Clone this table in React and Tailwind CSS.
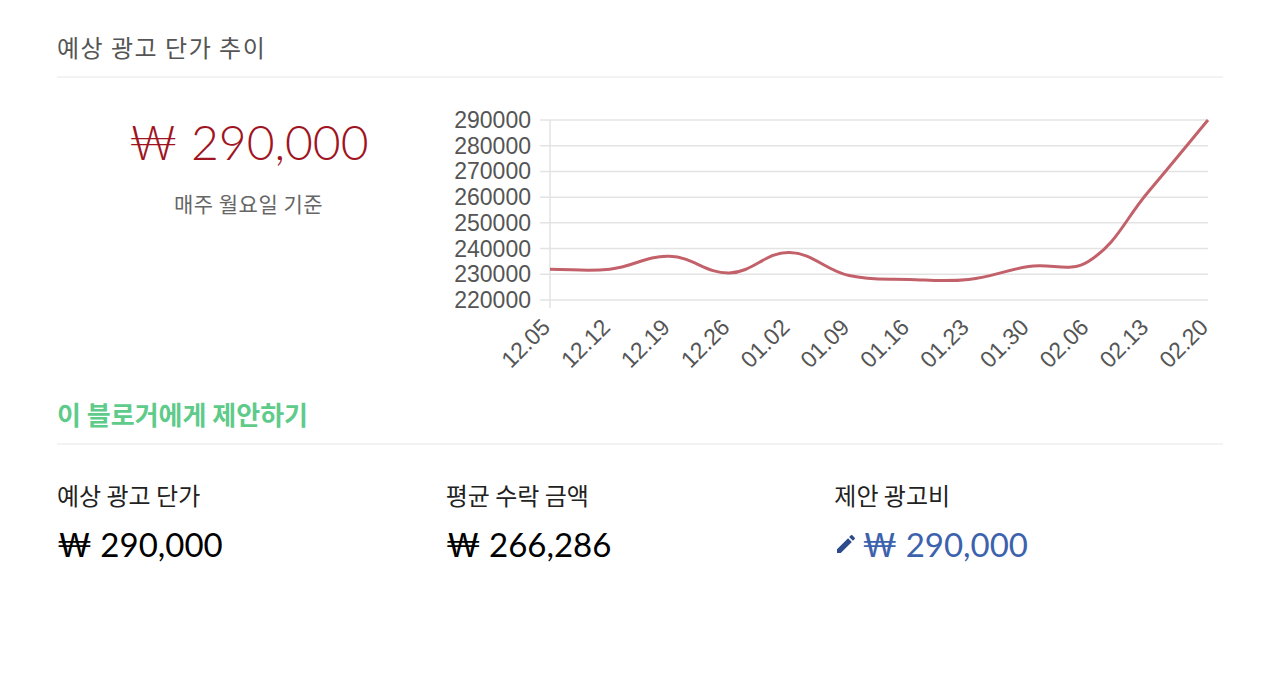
import { MdEdit } from "react-icons/md";

const KR = { fontFamily: '"Noto Sans CJK KR", "Noto Sans", sans-serif' };
const NUM = { fontFamily: 'Lato, "Noto Sans", "Noto Sans CJK KR", sans-serif' };

const labels = ["12.05", "12.12", "12.19", "12.26", "01.02", "01.09", "01.16", "01.23", "01.30", "02.06", "02.13", "02.20"];
const values = [232000, 232000, 237000, 230500, 238500, 229500, 228000, 228000, 233000, 235000, 262000, 290000];
const ticks = [290000, 280000, 270000, 260000, 250000, 240000, 230000, 220000];

// plot area in svg coords
const X0 = 103;
const X1 = 761;
const Y0 = 21;
const Y1 = 201;
const xAt = (i) => X0 + ((X1 - X0) * i) / (labels.length - 1);
const yAt = (v) => Y0 + ((290000 - v) / 70000) * (Y1 - Y0);

function splinePath(pts, t = 0.4) {
  const cps = pts.map((cur, i) => {
    const prev = pts[i - 1] || cur;
    const next = pts[i + 1] || cur;
    const d01 = Math.hypot(cur.x - prev.x, cur.y - prev.y);
    const d12 = Math.hypot(next.x - cur.x, next.y - cur.y);
    const s01 = d01 + d12 ? d01 / (d01 + d12) : 0;
    const s12 = d01 + d12 ? d12 / (d01 + d12) : 0;
    return {
      prev: { x: cur.x - t * s01 * (next.x - prev.x), y: cur.y - t * s01 * (next.y - prev.y) },
      next: { x: cur.x + t * s12 * (next.x - prev.x), y: cur.y + t * s12 * (next.y - prev.y) },
    };
  });
  let d = `M${pts[0].x},${pts[0].y}`;
  for (let i = 1; i < pts.length; i++) {
    const a = cps[i - 1].next;
    const b = cps[i].prev;
    d += ` C${a.x},${a.y} ${b.x},${b.y} ${pts[i].x},${pts[i].y}`;
  }
  return d;
}

function TrendChart() {
  const pts = values.map((v, i) => ({ x: xAt(i), y: yAt(v) }));
  return (
    <svg width="775" height="280" className="block shrink-0 overflow-visible">
      {ticks.map((v) => (
        <g key={v}>
          <line x1={X0 - 10} x2={X1} y1={yAt(v)} y2={yAt(v)} stroke="#e3e3e3" strokeWidth="1.5" />
          <text
            x={84}
            y={yAt(v) + 8}
            textAnchor="end"
            fontSize="23"
            fill="#555"
            fontFamily='"Liberation Sans", Arial, sans-serif'
          >
            {v}
          </text>
        </g>
      ))}
      <line x1={X0} x2={X0} y1={Y0} y2={Y1 + 8} stroke="#e3e3e3" strokeWidth="1.5" />
      {labels.map((l, i) => (
        <text
          key={l}
          transform={`translate(${xAt(i) - 10},${218}) rotate(-45)`}
          y={16.5}
          textAnchor="end"
          fontSize="23"
          fill="#555"
          fontFamily='"Liberation Sans", Arial, sans-serif'
        >
          {l}
        </text>
      ))}
      <path d={splinePath(pts)} fill="none" stroke="#c3616a" strokeWidth="3" />
    </svg>
  );
}

function Stat({ label, value, edit }) {
  return (
    <div>
      <div className="text-[24px] leading-[32px] text-[#222]" style={KR}>
        {label}
      </div>
      <div className="mt-[13px] flex items-center leading-[40px]">
        {edit && <MdEdit className="mr-[4px] text-[#2c4a8c]" size={24} />}
        <span className={`text-[33px] ${edit ? "text-[#3d62ad]" : "text-black"}`} style={NUM}>
          {value}
        </span>
      </div>
    </div>
  );
}

export default function App() {
  return (
    <div className="min-h-[678px] bg-white px-[57px]">
      <div className="border-b-2 border-[#f3f3f3] pt-[32px] pb-[14px]">
        <h2 className="text-[24px] leading-[30px] tracking-[1.5px] text-[#555]" style={KR}>
          예상 광고 단가 추이
        </h2>
      </div>

      <div className="flex pt-[21px]">
        <div className="w-[390px] shrink-0 pr-[7px] text-center">
          <div className="mt-[18px] text-[48px] font-light leading-[50px] text-[#a0141f]" style={NUM}>
            ₩ 290,000
          </div>
          <div className="mt-[22px] text-[21px] leading-[28px] tracking-[0.5px] text-[#666]" style={KR}>
            매주 월요일 기준
          </div>
        </div>
        <TrendChart />
      </div>

      <div className="mt-[18px] border-b-2 border-[#f3f3f3] pb-[12px]">
        <h3 className="text-[26px] font-bold leading-[34px] text-[#5fcb8b]" style={KR}>
          이 블로거에게 제안하기
        </h3>
      </div>

      <div className="grid grid-cols-3 pt-[34px]">
        <Stat label="예상 광고 단가" value="₩ 290,000" />
        <Stat label="평균 수락 금액" value="₩ 266,286" />
        <Stat label="제안 광고비" value="₩ 290,000" edit />
      </div>
    </div>
  );
}
